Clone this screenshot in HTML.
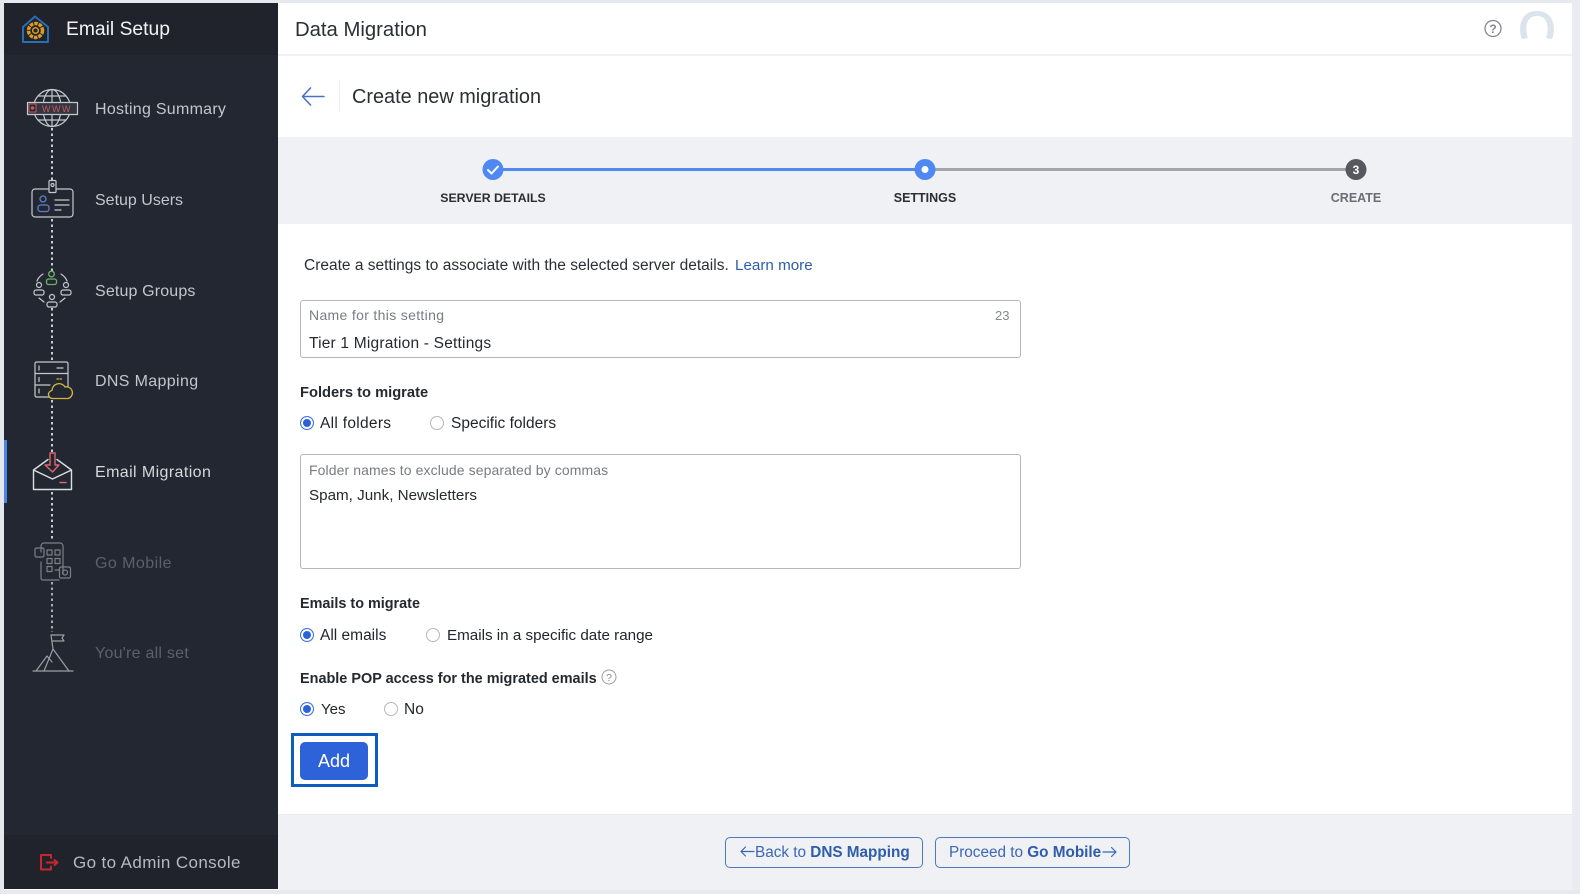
<!DOCTYPE html>
<html><head><meta charset="utf-8"><title>Data Migration</title>
<style>
html,body{margin:0;padding:0;background:#fff}
#p{position:relative;width:1580px;height:894px;overflow:hidden;background:#fff;font-family:"Liberation Sans",sans-serif;color:#2b2e33}
#p div,#p span.t{position:absolute;white-space:nowrap}
.t{line-height:20px;height:20px}
.nav{left:95px;font-size:16px;color:#c3c6cc}
.lab{font-size:14.5px;color:#22252a}
.bold{font-weight:bold;font-size:14.5px;color:#25282d}
.r{width:12px;height:12px;border-radius:50%;border:1.5px solid #b8b8b8;background:#fff}
.r.on{border-color:#3d72e0;box-shadow:inset 0 0 0 2px #fff;background:#2c62d8}
.step{font-size:12.5px;font-weight:bold;color:#2b2e33;text-align:center;width:200px}
.btn{border:1.5px solid #4f78bf;border-radius:5px;height:29px;box-sizing:content-box;color:#3b66b5;font-size:15.3px;line-height:29px}
.btn b{color:#2f5cab}
svg{position:absolute;left:0;top:0}
</style></head><body><div id="p">
<div style="left:0;top:0;width:1580px;height:3px;background:#e6e9ed"></div>
<div style="left:0;top:0;width:4px;height:894px;background:#e4e8ec"></div>
<div style="left:1572px;top:0;width:8px;height:894px;background:#e9ecf0"></div>
<div style="left:0;top:890px;width:1580px;height:4px;background:#e6e9ed"></div>
<div style="left:4px;top:3px;width:274px;height:886px;background:#222732"></div>
<div style="left:4px;top:3px;width:274px;height:52px;background:#20232c"></div>
<div style="left:4px;top:835px;width:274px;height:54px;background:#20232c"></div>
<div style="left:4px;top:440px;width:3px;height:63px;background:#4d85e6"></div>
<div class="t" style="left:66px;top:20px;font-size:19.3px;font-weight:500;color:#f2f3f5">Email Setup</div>
<div class="t nav" style="top:100px;letter-spacing:.27px">Hosting Summary</div>
<div class="t nav" style="top:191px">Setup Users</div>
<div class="t nav" style="top:282px;letter-spacing:.15px">Setup Groups</div>
<div class="t nav" style="top:372px;letter-spacing:.35px">DNS Mapping</div>
<div class="t nav" style="top:463px;color:#d6d8dc;letter-spacing:.4px">Email Migration</div>
<div class="t nav" style="top:554px;color:#5c606a;letter-spacing:.45px">Go Mobile</div>
<div class="t nav" style="top:644px;color:#5c606a;letter-spacing:.25px">You're all set</div>
<div class="t" style="left:73px;top:853px;font-size:17px;color:#b6b9bf;letter-spacing:.38px">Go to Admin Console</div>

<svg width="290" height="894" viewBox="0 0 290 894" fill="none" stroke-linecap="round" stroke-linejoin="round">
<!-- logo -->
<path d="M35 16.500 48 27v15H23V27z" stroke="#2a6db0" stroke-width="2"/>
<circle cx="35.500" cy="30.500" r="7" stroke="#d99c24" stroke-width="3.500" stroke-dasharray="3.500 1" stroke-linecap="butt"/>
<circle cx="35.500" cy="30.500" r="2.800" stroke="#d99c24" stroke-width="1.500"/>
<!-- connectors -->
<g stroke="#c9ccd1" stroke-width="2" stroke-dasharray="2.500 3" stroke-linecap="butt">
<path d="M52 128V180M52 219V272M52 308V361M52 400V453M52 492V541"/>
<path d="M52 582V632" stroke="#a8abb1"/>
</g>
<!-- globe -->
<g stroke="#c5c8cd" stroke-width="1.200">
<circle cx="52" cy="108" r="18.500"/><ellipse cx="52" cy="108" rx="9" ry="18.500"/><path d="M52 89.500V102M52 115V126.500M38 96H66M38 120H66"/>
<rect x="27.500" y="102.500" width="50" height="12" fill="#34363f"/></g>
<rect x="29" y="104" width="7" height="8" stroke="#c25a60" fill="#222732"/>
<circle cx="32.500" cy="108" r="1.800" fill="#c25a60"/>
<text x="42" y="112" font-family="Liberation Sans" font-size="9" letter-spacing="1.500" fill="#c25a60">WWW</text>
<!-- users -->
<g stroke="#c5c8cd" stroke-width="1.200">
<path d="M49 189H35a3 3 0 0 0-3 3v22a3 3 0 0 0 3 3h35a3 3 0 0 0 3-3v-22a3 3 0 0 0-3-3H56"/>
<rect x="49" y="180.500" width="7" height="12" rx="1"/><circle cx="52.500" cy="185" r="1.500"/>
<path d="M55 200H69M55 205H69M55 210H61"/></g>
<g stroke="#5f7fc4" stroke-width="1.300"><circle cx="43" cy="199" r="3"/><rect x="38" y="205" width="11" height="6.500" rx="2.500"/></g>
<!-- groups -->
<g stroke="#c5c8cd" stroke-width="1.200">
<circle cx="39" cy="285" r="2.500"/><rect x="34" y="290" width="10" height="5" rx="2"/>
<circle cx="66" cy="285" r="2.500"/><rect x="61" y="290" width="10" height="5" rx="2"/>
<circle cx="52" cy="297" r="2.500"/><rect x="47" y="302" width="10" height="5" rx="2"/>
<path d="M37 281c1-3 3-5 6-7M67 281c-1-3-3-5-6-7M39 298l5 4M65 298l-5 4"/></g>
<g stroke="#6fb36a" stroke-width="1.300"><circle cx="51.500" cy="274" r="2.800"/><rect x="46.500" y="279" width="10" height="5.500" rx="2"/></g>
<!-- dns -->
<g stroke="#c5c8cd" stroke-width="1.200">
<rect x="35" y="362" width="33" height="35" rx="1.500"/><path d="M35 373.500H68M35 385H50"/>
<path d="M39 366v4M39 377.500v4M39 389v4M57 368H63"/></g>
<path d="M57 379h6" stroke="#d9b64a" stroke-width="1.200" stroke-dasharray="1.500 1.500"/>
<path d="M53 398.500a4 4 0 0 1-1-8 7 7 0 0 1 13-3.500 5.500 5.500 0 0 1 3 11.500z" stroke="#d3b53f" stroke-width="1.300" fill="#222732"/>
<!-- email -->
<g stroke="#dcdee2" stroke-width="1.400">
<path d="M33.500 470V489.500H71.500V470M33.500 470 48 459.500M71.500 470 57 459.500M33.500 470 52.500 479 71.500 470"/></g>
<path d="M50 453h5V465h4l-6.500 7-7.500-7H50z" stroke="#d9666d" stroke-width="1.400" fill="#222732"/>
<path d="M60 482.500h6" stroke="#d9666d" stroke-width="1.500" stroke-dasharray="1.500 1"/>
<!-- mobile -->
<g stroke="#7c7f86" stroke-width="1.200">
<path d="M41 552v-6a3 3 0 0 1 3-3h16a3 3 0 0 1 3 3v28M41 562v16a2 2 0 0 0 2 2h16"/>
<rect x="35" y="548" width="9" height="9" rx="1.500"/><rect x="47" y="550" width="5" height="5"/><rect x="55" y="550" width="5" height="5"/>
<rect x="47" y="558.500" width="5" height="5"/><rect x="55" y="558.500" width="5" height="5"/><rect x="47" y="566.500" width="5" height="5"/>
<path d="M55 570H59"/><rect x="59.500" y="567" width="11" height="11" rx="1.500"/><circle cx="65" cy="572.500" r="2.500"/></g>
<!-- mountain -->
<g stroke="#9b9ea4" stroke-width="1.200">
<path d="M33 671H73M36 671 47 656 52 662M44 671 53 649 69 671M53 649 51 635"/>
<path d="M51 635H64L62 638 64 641H52"/></g>
<!-- admin -->
<path d="M51 855H41V869.500H51M51 855V858M51 866.500V869.500M47 862.500H57M54.500 860 57.500 862.500 54.500 865" stroke="#c8282c" stroke-width="2"/>
</svg>

<!-- main header -->
<div style="left:278px;top:54px;width:1294px;height:2px;background:#f0f1f3"></div>
<div class="t" style="left:295px;top:19.500px;font-size:20.300px;color:#2b2e33">Data Migration</div>
<div class="t" style="left:352px;top:87px;font-size:19.900px;color:#2b2e33">Create new migration</div>
<div style="left:339px;top:80px;width:1px;height:32px;background:#eceef0"></div>

<div style="left:278px;top:137px;width:1294px;height:87px;background:#eff1f4"></div>
<div style="left:278px;top:815px;width:1294px;height:75px;background:#eff1f4"></div>
<div style="left:278px;top:814px;width:1294px;height:1px;background:#e9ebee"></div>

<svg width="1580" height="894" viewBox="0 0 1580 894" fill="none" stroke-linecap="round" stroke-linejoin="round">
<path d="M324 96.500H303M310.500 88 302.500 96.500 310.500 105" stroke="#4a71c4" stroke-width="1.600"/>
<path d="M493 169.500H925" stroke="#5289ef" stroke-width="3" stroke-linecap="butt"/>
<path d="M925 169.500H1356" stroke="#a3a5a9" stroke-width="3" stroke-linecap="butt"/>
<circle cx="493" cy="169.500" r="10.500" fill="#4f88f2"/>
<path d="M488 170 491.500 173.500 498 166.500" stroke="#fff" stroke-width="2"/>
<circle cx="925" cy="169.500" r="10.500" fill="#4f88f2"/>
<circle cx="925" cy="169.500" r="3.500" fill="#fff"/>
<circle cx="1356" cy="169.500" r="10.500" fill="#55585f"/>
<text x="1356" y="174" text-anchor="middle" font-family="Liberation Sans" font-size="12" font-weight="bold" fill="#fff">3</text>
<!-- help -->
<circle cx="1493" cy="28.500" r="8" stroke="#85888e" stroke-width="1.300"/>
<text x="1493" y="33" text-anchor="middle" font-family="Liberation Sans" font-size="12" font-weight="bold" fill="#85888e">?</text>
<!-- avatar -->
<path d="M1522 39C1518 30 1519 11 1537 11 1555 11 1556 30 1552 39L1546 38C1549 30 1549 16 1537 16 1525 16 1525 30 1528 38Z" fill="#dbe3ec"/>
<!-- pop help -->
<circle cx="609" cy="677" r="7" stroke="#9a9da2" stroke-width="1"/>
<text x="609" y="681" text-anchor="middle" font-family="Liberation Sans" font-size="10.500" fill="#85888e">?</text>
<!-- button arrows -->
<path d="M754 851.500H741M745.500 847 741 851.500 745.500 856" stroke="#3b66b5" stroke-width="1.200"/>
<path d="M1103 852H1116M1111.500 847.500 1116 852 1111.500 856.500" stroke="#3b66b5" stroke-width="1.200"/>
</svg>

<div class="t step" style="left:393px;top:187.500px;font-size:12.300px">SERVER DETAILS</div>
<div class="t step" style="left:825px;top:187.500px">SETTINGS</div>
<div class="t step" style="left:1256px;top:187.500px;color:#6a6d74">CREATE</div>

<div class="t" style="left:304px;top:255.500px;font-size:15.500px;color:#2b2e33">Create a settings to associate with the selected server details.</div>
<div class="t" style="left:735px;top:255.500px;font-size:15.200px;color:#2d5cab">Learn more</div>

<div style="left:300px;top:300px;width:719px;height:56px;border:1.500px solid #b5b7ba;border-radius:3px"></div>
<div class="t" style="left:309px;top:305px;font-size:14px;color:#797c82;letter-spacing:.33px">Name for this setting</div>
<div class="t" style="left:309px;top:333.500px;font-size:15.500px;color:#26292e;letter-spacing:.2px">Tier 1 Migration - Settings</div>
<div class="t" style="left:995px;top:306px;font-size:13px;color:#85888e">23</div>

<div class="t bold" style="left:300px;top:382.500px;font-size:14.700px">Folders to migrate</div>
<div class="r on" style="left:300px;top:416px"></div>
<div class="t lab" style="left:320px;top:413.500px;font-size:15.500px;letter-spacing:.3px">All folders</div>
<div class="r" style="left:430px;top:416px"></div>
<div class="t lab" style="left:451px;top:413.500px;font-size:15.500px">Specific folders</div>

<div style="left:300px;top:454px;width:719px;height:113px;border:1.500px solid #b5b7ba;border-radius:3px"></div>
<div class="t" style="left:309px;top:460px;font-size:14px;color:#797c82;letter-spacing:.1px">Folder names to exclude separated by commas</div>
<div class="t" style="left:309px;top:486px;font-size:15.200px;color:#26292e">Spam, Junk, Newsletters</div>

<div class="t bold" style="left:300px;top:593.500px;font-size:14.400px">Emails to migrate</div>
<div class="r on" style="left:300px;top:628px"></div>
<div class="t lab" style="left:320px;top:625.500px;font-size:15.500px">All emails</div>
<div class="r" style="left:426px;top:628px"></div>
<div class="t lab" style="left:447px;top:625.500px;font-size:15.200px">Emails in a specific date range</div>

<div class="t bold" style="left:300px;top:668.500px;font-size:14.450px">Enable POP access for the migrated emails</div>
<div class="r on" style="left:300px;top:702px"></div>
<div class="t lab" style="left:321px;top:699.500px;font-size:15px">Yes</div>
<div class="r" style="left:384px;top:702px"></div>
<div class="t lab" style="left:404px;top:699.500px;font-size:15.500px">No</div>

<div style="left:291px;top:733px;width:81px;height:48px;border:3px solid #0f5cc0"></div>
<div style="left:300px;top:742px;width:68px;height:38px;background:#2e62d9;border-radius:5px;color:#fff;font-size:18px;line-height:38px;text-align:center">Add</div>

<div class="btn" style="left:725px;top:837px;width:196px;padding-left:0"><span style="position:absolute;left:29px;top:0;white-space:nowrap">Back to <b>DNS Mapping</b></span></div>
<div class="btn" style="left:935px;top:837px;width:193px"><span style="position:absolute;left:13px;top:0;white-space:nowrap">Proceed to <b>Go Mobile</b></span></div>
</div></body></html>
